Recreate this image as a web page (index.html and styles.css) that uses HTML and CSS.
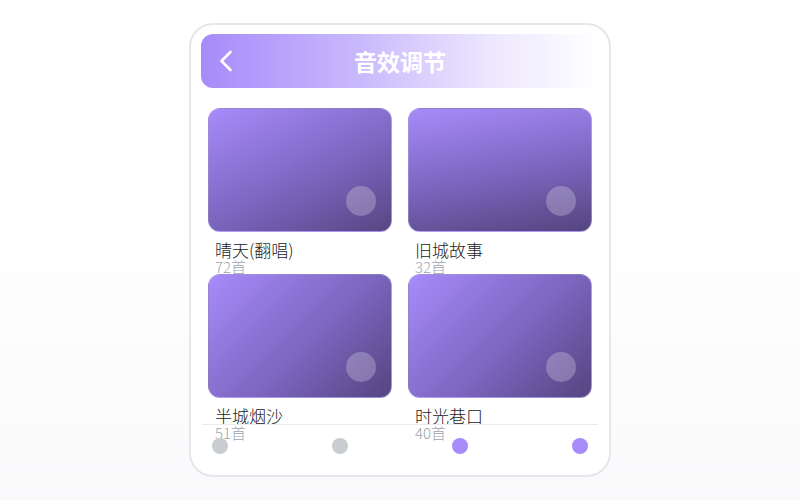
FILE: index.html
```html
<!DOCTYPE html>
<html lang="zh">
<head>
<meta charset="utf-8">
<title>音效调节</title>
<link rel="stylesheet" href="styles.css">
</head>
<body>
<div class="phone">
  <header class="topbar">
    <svg class="back" width="24" height="24" viewBox="0 0 24 24" fill="none" stroke="#fff" stroke-width="2.6" stroke-linecap="round" stroke-linejoin="round"><path d="M15.5 3 L6.5 12 L15.5 21"/></svg>
    <h1 class="title">音效调节</h1>
  </header>
  <main class="content">
    <div class="grid">
      <div class="item">
        <div class="cover cover-a"><span class="play"></span></div>
        <div class="name">晴天(翻唱)</div>
        <div class="count">72首</div>
      </div>
      <div class="item">
        <div class="cover cover-b"><span class="play"></span></div>
        <div class="name">旧城故事</div>
        <div class="count">32首</div>
      </div>
      <div class="item">
        <div class="cover cover-c"><span class="play"></span></div>
        <div class="name">半城烟沙</div>
        <div class="count">51首</div>
      </div>
      <div class="item">
        <div class="cover cover-c"><span class="play"></span></div>
        <div class="name">时光巷口</div>
        <div class="count">40首</div>
      </div>
    </div>
  </main>
  <nav class="tabs">
    <span class="dot"></span>
    <span class="dot"></span>
    <span class="dot dot-on"></span>
    <span class="dot dot-on"></span>
  </nav>
</div>
</body>
</html>
```
FILE: styles.css
```css
* { box-sizing: border-box; }
html, body { margin: 0; padding: 0; }
html { background: linear-gradient(180deg, #ffffff 0%, #ffffff 45%, #f9f9fb 100%); }
body {
  width: 800px;
  height: 500px;
  display: flex;
  justify-content: center;
  align-items: center;
  font-family: "Noto Sans CJK SC", "Noto Sans", sans-serif;
}
.phone {
  width: 422px;
  height: 454px;
  border: 2px solid #e6e6ec;
  border-radius: 24px;
  padding: 9px 10px;
  display: flex;
  flex-direction: column;
  background: #fff;
}
.topbar {
  height: 54px;
  border-radius: 12px;
  background: linear-gradient(90deg, #a78bfa 0%, #c9b9fc 40%, #ece6fe 72%, #ffffff 100%);
  display: flex;
  align-items: center;
  padding-left: 14px;
  flex-shrink: 0;
}
.back { display: block; }
.title {
  margin: 0;
  flex: 1;
  text-align: center;
  margin-left: -38px;
  color: #fff;
  font-size: 23px;
  font-weight: 700;
  line-height: 54px;
}
.content {
  margin-top: 20px;
  height: 316px;
  padding: 0 7px;
  flex-shrink: 0;
}
.grid {
  display: grid;
  grid-template-columns: 184px 184px;
  column-gap: 16px;
  grid-auto-rows: 166px;
}
.item { min-width: 0; }
.cover {
  height: 124px;
  border-radius: 12px;
  border: 1px solid rgba(196, 181, 253, 0.45);
  display: flex;
  justify-content: flex-end;
  align-items: flex-end;
  padding: 0 15px 15px 0;
  position: relative;
  z-index: 1;
}
.cover-a { background: linear-gradient(155deg, #a78bfa 0%, #7c66c0 55%, #574683 100%); }
.cover-b { background: linear-gradient(170deg, #a78bfa 0%, #7a64bd 55%, #55457f 100%); }
.cover-c { background: linear-gradient(135deg, #a78bfa 0%, #7c66c0 55%, #554580 100%); }
.play {
  width: 30px;
  height: 30px;
  border-radius: 50%;
  background: rgba(255, 255, 255, 0.24);
}
.name {
  margin-top: 7px;
  padding-left: 7px;
  font-size: 17px;
  font-weight: 300;
  line-height: 21px;
  color: #222;
  white-space: nowrap;
}
.count {
  padding-left: 7px;
  font-size: 15px;
  font-weight: 300;
  line-height: 14px;
  color: #a0a4ab;
}
.tabs {
  margin: 0 1px;
  border-top: 1px solid #ececf0;
  padding: 13px 10px 0;
  display: flex;
  justify-content: space-between;
  align-items: flex-start;
}
.dot {
  width: 16px;
  height: 16px;
  border-radius: 50%;
  background: #c9cdd2;
}
.dot-on { background: #a78bfa; }
```
